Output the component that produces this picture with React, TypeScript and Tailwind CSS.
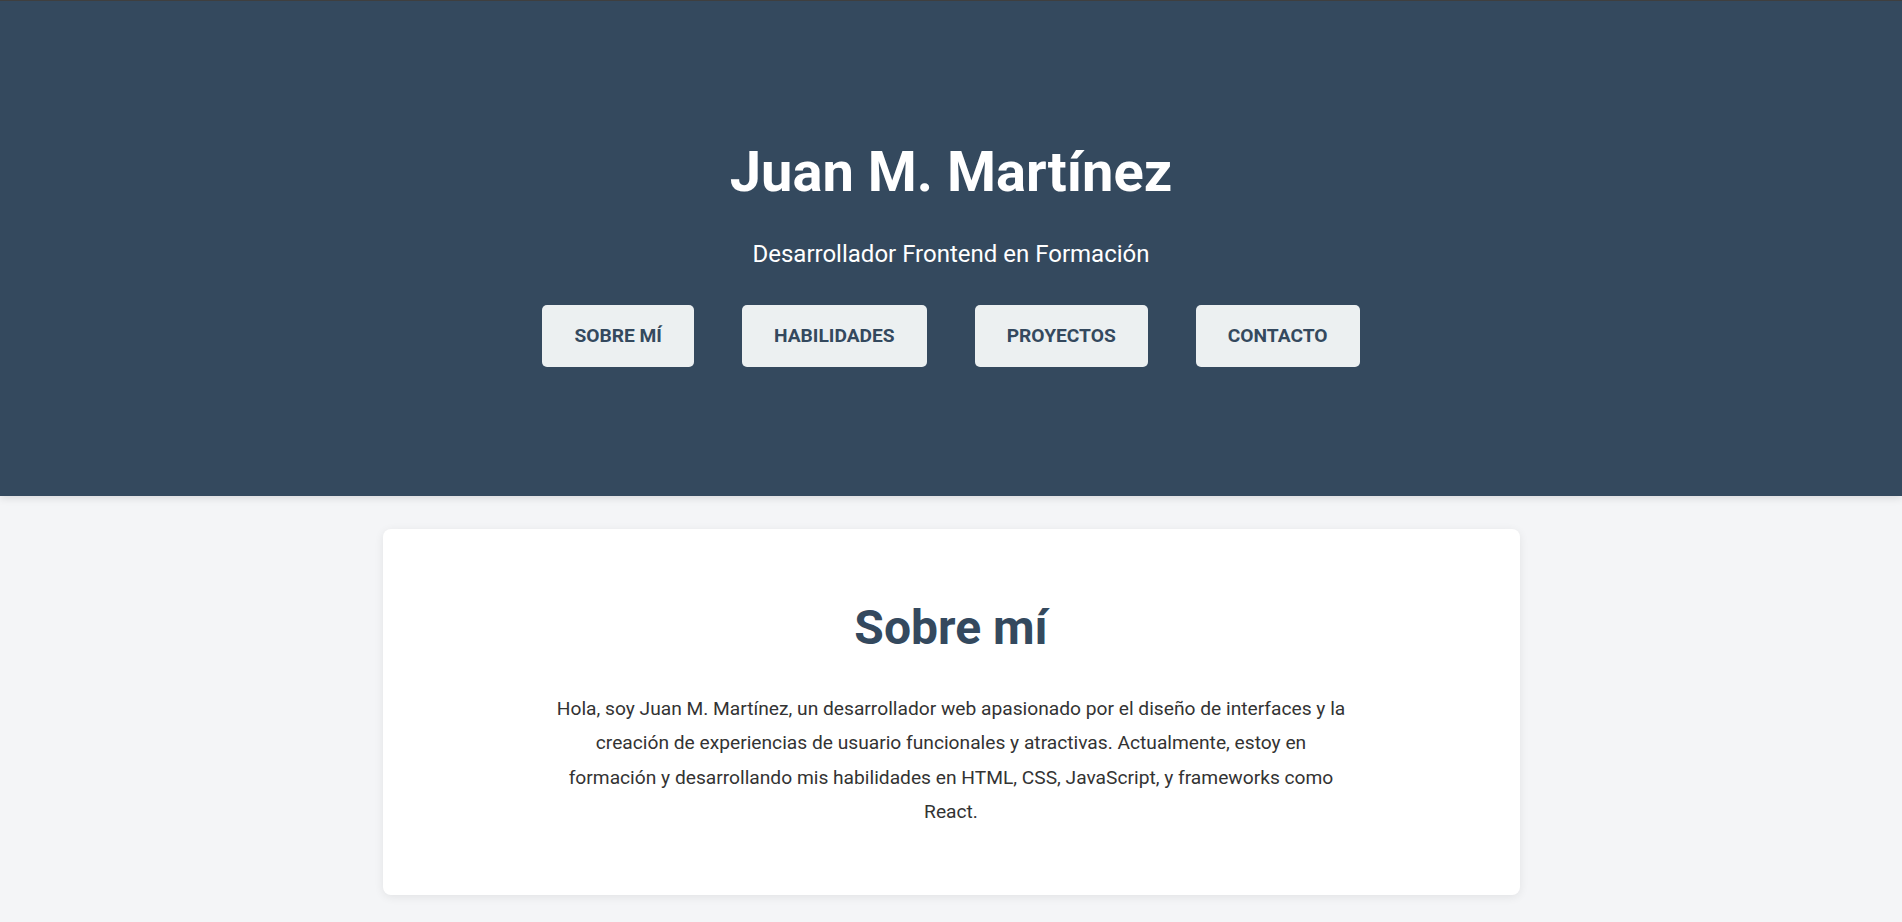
const links = ["Sobre mí", "Habilidades", "Proyectos", "Contacto"];

export default function App() {
  return (
    <div className="min-h-[922px] bg-[#f4f5f7] font-['Roboto',sans-serif]">
      <header className="border-t border-[#3f3f3f] bg-[#34495e] pt-[139px] pb-[129px] text-center text-white shadow-[0_2px_8px_rgba(0,0,0,0.12)]">
        <h1 className="text-[56px] font-bold leading-[1.17]">Juan M. Martínez</h1>
        <p className="mt-[34px] text-[24px] leading-[1.17]">Desarrollador Frontend en Formación</p>
        <nav className="mt-[37px] flex justify-center gap-[48px]">
          {links.map((l) => (
            <a
              key={l}
              href="#"
              className="rounded-[5px] bg-[#ecf0f1] px-[32px] py-[20px] text-[19.2px] font-bold uppercase leading-[22px] text-[#34495e]"
            >
              {l}
            </a>
          ))}
        </nav>
      </header>

      <main className="pt-[33px] pb-8">
        <section className="mx-auto w-[1137px] rounded-lg bg-white pt-[71px] pb-[65px] text-center shadow-[0_2px_10px_rgba(0,0,0,0.08)]">
          <h2 className="text-[48px] font-bold leading-[1.17] text-[#34495e]">Sobre mí</h2>
          <p className="mx-auto mt-[36px] max-w-[800px] text-[19.2px] leading-[1.8] text-[#333]">
            Hola, soy Juan M. Martínez, un desarrollador web apasionado por el diseño de interfaces y la
            creación de experiencias de usuario funcionales y atractivas. Actualmente, estoy en formación y
            desarrollando mis habilidades en HTML, CSS, JavaScript, y frameworks como React.
          </p>
        </section>
      </main>
    </div>
  );
}
